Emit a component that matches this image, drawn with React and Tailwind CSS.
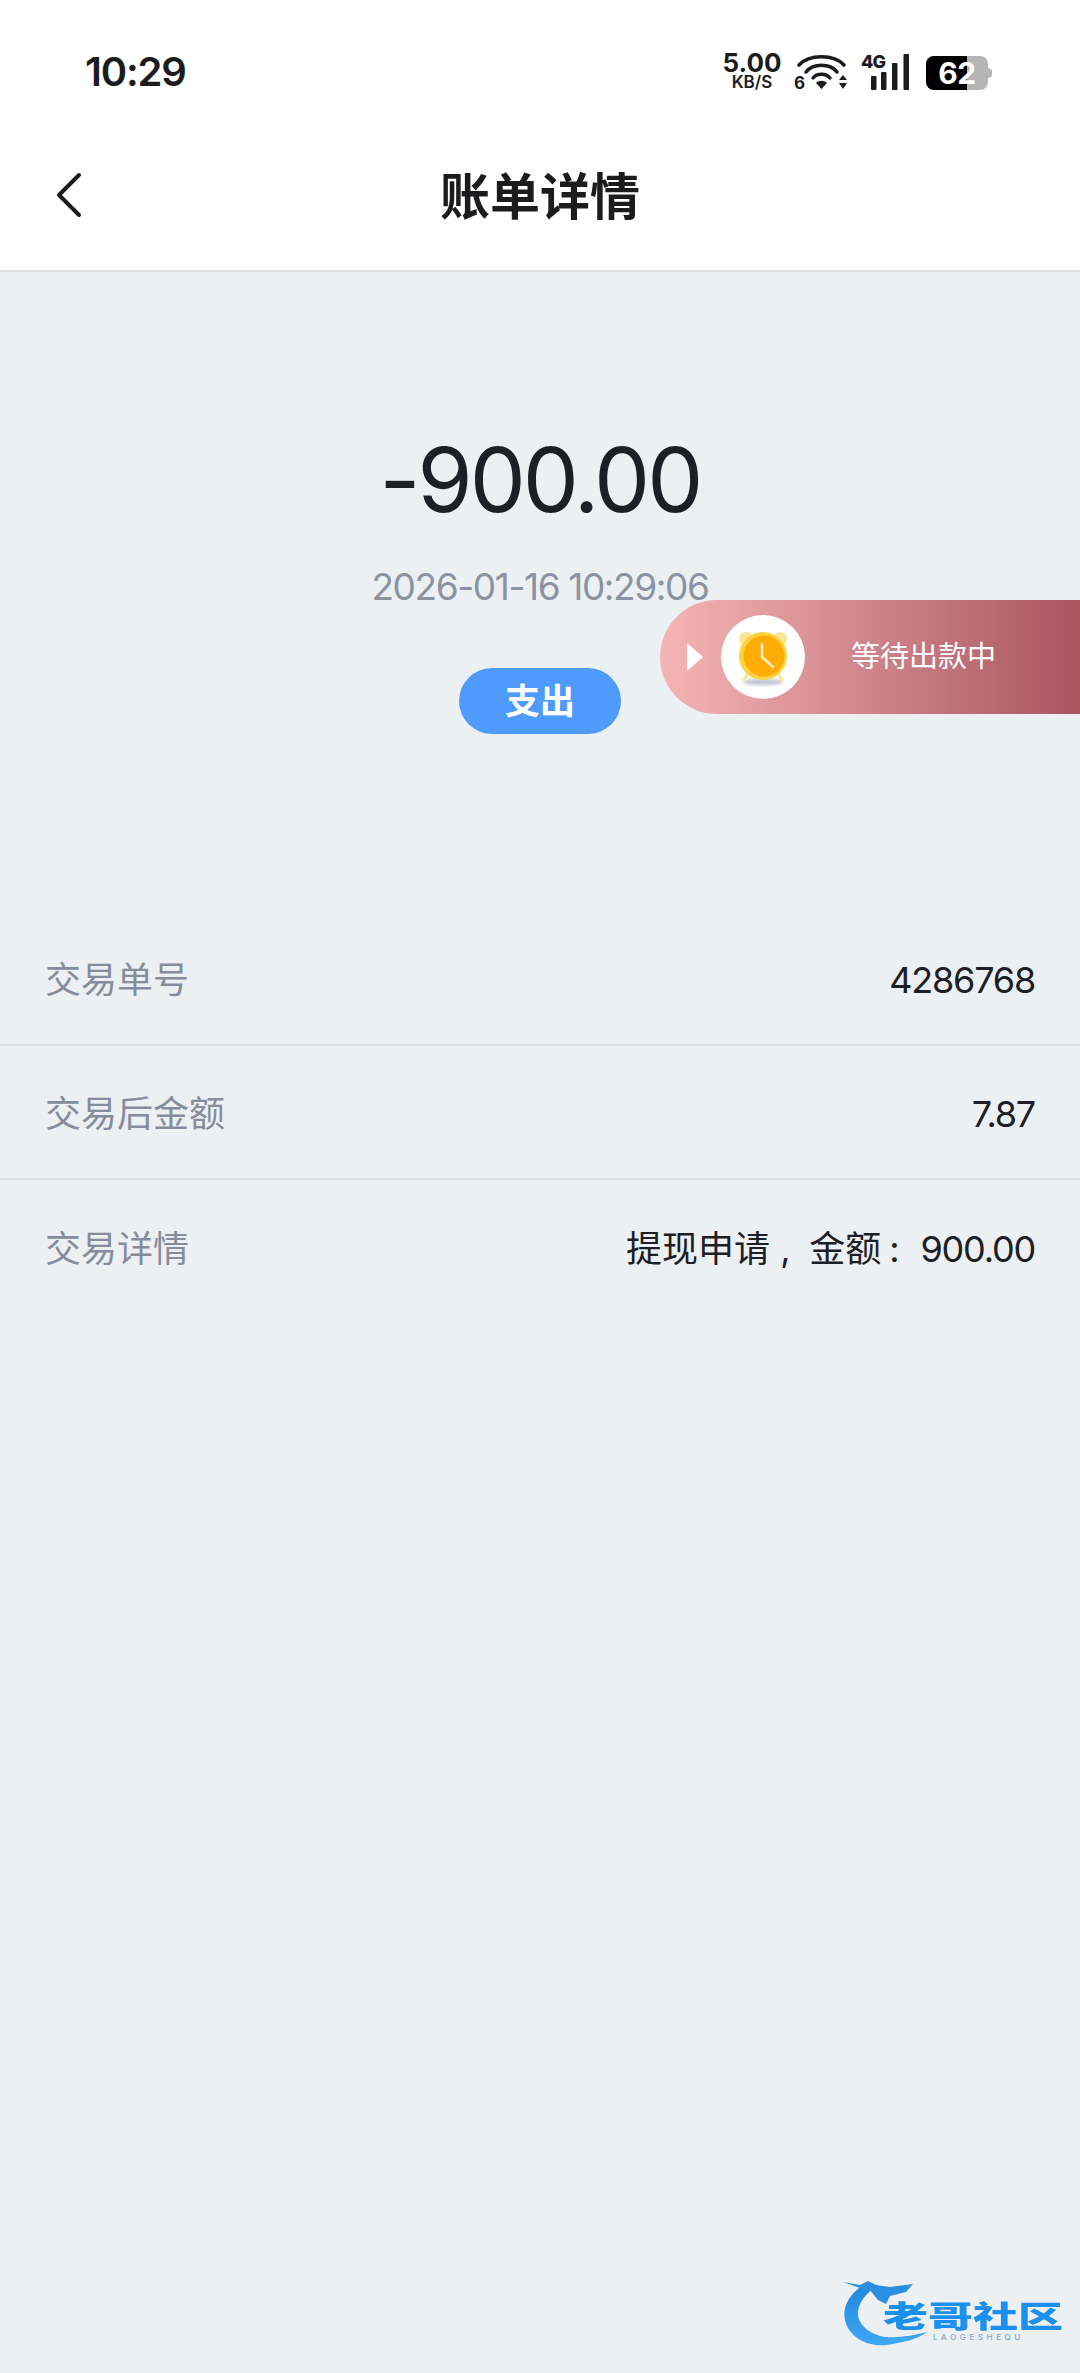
const font = { fontFamily: 'Inter, "Noto Sans CJK SC", sans-serif' };

function StatusIcons() {
  return (
    <div className="flex items-start mt-[52px]">
      <div className="flex flex-col items-center w-[58px] text-[#1c1c1e] font-bold">
        <span className="text-[26px] h-[22px] leading-[22px]">5.00</span>
        <span className="mt-[1px] text-[17px] h-[14px] leading-[14px] font-semibold">KB/S</span>
      </div>
      <svg className="ml-[13px] mt-[2px] overflow-visible" width="53" height="36" viewBox="0 0 53 36" fill="none">
        <path d="M5 11 C15 0 40 0 50 11" stroke="#1c1c1e" strokeWidth="3.6" strokeLinecap="round" />
        <path d="M12 18 C19 9 36 9 43 18" stroke="#1c1c1e" strokeWidth="3.6" strokeLinecap="round" />
        <path d="M19 24 C23 19 32 19 36 24" stroke="#1c1c1e" strokeWidth="3.4" strokeLinecap="round" />
        <path d="M22 29 C25 26 30 26 33 29 L27.5 35 Z" fill="#1c1c1e" />
        <path d="M45 26 L49 21 L53 26 Z M45 29 L53 29 L49 35 Z" fill="#1c1c1e" />
        <text x="0" y="35" fontSize="17" fontWeight="700" fill="#1c1c1e" style={font}>6</text>
      </svg>
      <svg className="ml-[14px] mt-[2px] overflow-visible" width="48" height="36" viewBox="0 0 48 36" fill="#1c1c1e">
        <rect x="10" y="22" width="5.5" height="14" rx="1" />
        <rect x="20" y="18" width="5.5" height="18" rx="1" />
        <rect x="31" y="9" width="5.5" height="27" rx="1" />
        <rect x="42.5" y="0" width="5.5" height="36" rx="1" />
        <text x="0" y="14" fontSize="18" fontWeight="800" letterSpacing="-1" style={font}>4G</text>
      </svg>
      <div className="relative ml-[17px] mt-[4px] w-[62px] h-[34px] rounded-[8px] bg-[#b5b5b5] overflow-hidden flex items-center justify-center">
        <div className="absolute left-0 top-0 h-full w-[41px] bg-black" />
        <span className="relative text-white text-[30px] font-bold leading-none tracking-[-0.5px]">62</span>
      </div>
      <div className="mt-[16px] w-[4px] h-[10px] rounded-r-sm bg-[#b5b5b5]" />
    </div>
  );
}

function AlarmIcon() {
  return (
    <svg width="58" height="62" viewBox="0 0 58 62">
      <defs>
        <filter id="blur"><feGaussianBlur stdDeviation="1.6" /></filter>
      </defs>
      <ellipse cx="29" cy="56" rx="20" ry="3.5" fill="#c6c8d6" filter="url(#blur)" />
      <circle cx="12" cy="13" r="7" fill="#fbe596" />
      <circle cx="46" cy="13" r="7" fill="#fbe596" />
      <path d="M14 47 L10 54 M44 47 L48 54" stroke="#fbe596" strokeWidth="3" strokeLinecap="round" />
      <circle cx="29" cy="30" r="24" fill="#fdd33f" />
      <circle cx="30" cy="30" r="20.5" fill="#ffad05" />
      <path d="M28 18 L28 31 L39 41" fill="none" stroke="#fff2d0" strokeWidth="2.4" strokeLinecap="round" strokeLinejoin="round" />
    </svg>
  );
}

function Logo() {
  return (
    <div className="absolute left-[840px] top-[2276px] w-[230px] h-[82px]">
      <svg className="absolute left-0 top-0" width="100" height="76" viewBox="0 0 100 76" fill="none">
        <defs>
          <linearGradient id="swoosh" x1="0" y1="0" x2="0" y2="1">
            <stop offset="0" stopColor="#1f86dc" />
            <stop offset="1" stopColor="#3fa9f5" />
          </linearGradient>
        </defs>
        <path d="M23 9 C10 18 2 30 5 44 C9 62 28 71 46 69 C62 67 78 63 87 56 C72 60 52 63 40 60 C26 56 17 46 18 36 C19 26 26 18 34 12 Z" fill="url(#swoosh)" />
        <path d="M3 6 L20 9 L28 5 L36 9 L50 11 L73 8 L66 16 L50 20 L46 28 L38 24 L30 14 L20 12 Z" fill="#2a8fe0" />
      </svg>
      <div className="absolute left-[43px] top-[24px] text-[#1b90ee] text-[30px] font-black leading-[32px] whitespace-nowrap origin-left scale-x-150">
        老哥社区
      </div>
      <div className="absolute left-[93px] top-[56px] w-[112px] text-[#7ea8cc] text-[8px] font-medium leading-[10px] tracking-[3.6px] whitespace-nowrap">
        LAOGESHEQU
      </div>
    </div>
  );
}

function Row({ label, children, line }) {
  return (
    <div className={`h-[134px] flex items-center justify-between px-[45px] pt-[4px] ${line ? 'border-b-2 border-[#dde0e5]' : ''}`}>
      <span className="text-[36px] text-[#858c9b]">{label}</span>
      <span className="text-[36px] text-[#1c2026] tracking-[-1.2px] flex items-center">{children}</span>
    </div>
  );
}

export default function App() {
  return (
    <div className="relative w-[1080px] h-[2373px] bg-[#edf0f3] overflow-hidden" style={font}>
      <div className="bg-white h-[272px] border-b-2 border-[#dedfe1]">
        <div className="h-[142px] flex items-start justify-between pl-[85px] pr-[88px]">
          <span className="mt-[47px] text-[40px] font-semibold leading-[50px] text-[#1c1c1e] tracking-[-1.2px]">10:29</span>
          <StatusIcons />
        </div>
        <div className="relative h-[110px] flex items-center justify-center">
          <svg className="absolute left-[56px] top-[30px]" width="26" height="46" viewBox="0 0 26 46" fill="none">
            <path d="M23 3 L3 23 L23 43" stroke="#1c1c1e" strokeWidth="4" strokeLinecap="round" strokeLinejoin="round" />
          </svg>
          <span className="text-[50px] font-bold text-[#1c1c1e] leading-none">账单详情</span>
        </div>
      </div>

      <div className="flex flex-col items-center pt-[152px]">
        <div className="text-[89px] text-[#1c2026] leading-[112px] tracking-[-3px]">-900.00</div>
        <div className="mt-[29px] text-[37px] text-[#8b93a3] leading-[44px] tracking-[-1.4px]">2026-01-16 10:29:06</div>
        <div className="mt-[59px] w-[162px] h-[66px] rounded-full bg-[#4e9bfb] flex items-center justify-center text-white text-[35px] font-bold">支出</div>
      </div>

      <div className="mt-[178px]">
        <Row label="交易单号" line>4286768</Row>
        <Row label="交易后金额" line>7.87</Row>
        <Row label="交易详情">
          <span className="tracking-normal">提现申请</span>
          <span className="ml-[10px] mr-[20px]">,</span>
          <span className="tracking-normal">金额</span>
          <span className="ml-[8px] mr-[22px]">:</span>
          900.00
        </Row>
      </div>

      <div className="absolute left-[660px] top-[600px] w-[420px] h-[114px] rounded-l-full bg-gradient-to-r from-[#f5b5b7] to-[#a85560] flex items-center">
        <div className="ml-[27px] w-0 h-0 border-y-[14px] border-y-transparent border-l-[16px] border-l-white" />
        <div className="ml-[18px] w-[84px] h-[84px] rounded-full bg-white flex items-center justify-center">
          <AlarmIcon />
        </div>
        <span className="ml-[46px] text-[29px] text-white">等待出款中</span>
      </div>

      <Logo />
    </div>
  );
}
